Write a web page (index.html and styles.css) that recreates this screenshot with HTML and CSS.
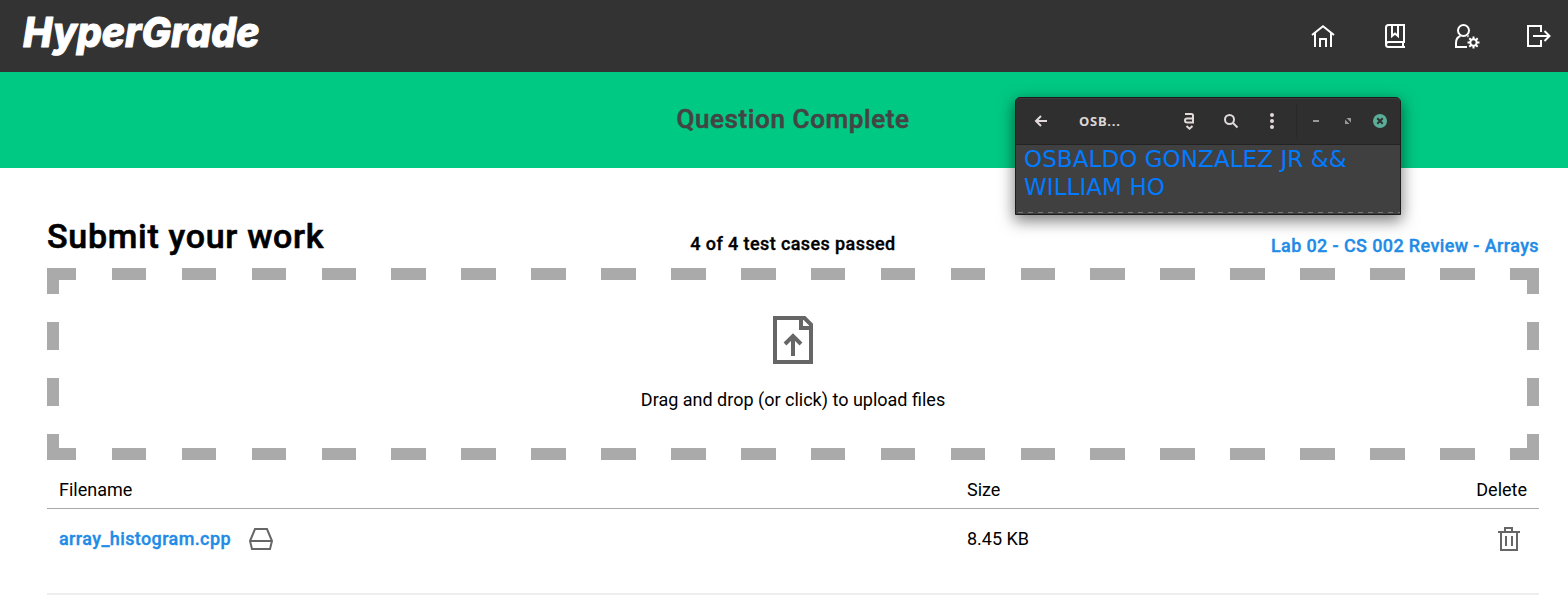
FILE: index.html
```
<!DOCTYPE html>
<html lang="en">
<head>
<meta charset="utf-8">
<title>HyperGrade</title>
<link rel="stylesheet" href="styles.css">
</head>
<body>
<header class="topbar">
  <svg class="logo" width="280" height="72" role="img" aria-label="HyperGrade"><text class="logo-text" x="23" y="46.500" textLength="236.500" lengthAdjust="spacingAndGlyphs">HyperGrade</text></svg>
  <nav class="nav">
    <svg class="icon" viewBox="0 0 24 24"><path d="M1 11 12 2.200 23 11M4 9v14M20 9v14M9 23v-8h6v8"/></svg>
    <svg class="icon" viewBox="0 0 24 24"><path d="M22 23H5.500Q3 23 3 20.500V3.500Q3 1 5.500 1H21V18H5.500Q3 18 3 20.500M20 18v5M9 1v11l3-2.500 3 2.500V1"/></svg>
    <svg class="icon" viewBox="0 0 24 24"><path d="M12 23H1v-4q0-5.500 4.500-7M12.500 12l1 .5"/><ellipse cx="8.500" cy="6.500" rx="5.500" ry="5.500"/><circle cx="18.500" cy="18.500" r="3.200"/><path d="M18.500 12.500v3M18.500 21.500v3M12.500 18.500h3M21.500 18.500h3M14.300 14.300l2 2M20.700 20.700l2 2M14.300 22.700l2-2M20.700 16.300l2-2"/></svg>
    <svg class="icon" viewBox="0 0 24 24"><path d="M14 8V2H1v20h13v-6M6 12h16M17.500 7l5 5-5 5"/></svg>
  </nav>
</header>
<section class="banner"><h2 class="banner-title">Question Complete</h2></section>
<main class="content">
  <div class="heading">
    <h1 class="title">Submit your work</h1>
    <p class="result">4 of 4 test cases passed</p>
    <a class="lab link">Lab 02 - CS 002 Review - Arrays</a>
  </div>
  <div class="dropzone">
    <svg class="upload" width="40" height="48" viewBox="0 0 40 48"><path d="M2 2h29.500L38 8.500V46H2zM28 2v10h10M20 40V20M12 28l8-8 8 8"/></svg>
    <p class="drop-text">Drag and drop (or click) to upload files</p>
  </div>
  <div class="row row-head"><span>Filename</span><span>Size</span><span class="end">Delete</span></div>
  <div class="row row-file">
    <span class="file"><a class="link">array_histogram.cpp</a>
      <svg class="drive" width="24" height="24" viewBox="0 0 24 24"><path d="M6 2h12l5 12-2 8H3L1 14zM1 14h22"/></svg></span>
    <span>8.45 KB</span>
    <svg class="trash" width="24" height="24" viewBox="0 0 24 24"><path d="M1 5h22M4 5v18h16V5M8 5V1h7v4M9 9v10M15 9v10"/></svg>
  </div>
</main>
<aside class="note">
  <div class="note-bar">
    <svg width="384" height="46" viewBox="0 0 384 46">
      <path class="glyph" d="M31 23H20M25 18l-5 5 5 5"/>
      <path class="glyph" d="M169 16h6.500q1.500 0 1.500 1.500V24.500h-6q-2 0-2-2t2-2h6M170.500 28l3 2.700 3-2.700"/>
      <circle class="glyph" cx="213.500" cy="21.500" r="4.500"/><path class="glyph" d="m217 25 4.500 4.500"/>
      <path class="dots" d="M254 17a2 2 0 1 0 4 0 2 2 0 1 0-4 0M254 23a2 2 0 1 0 4 0 2 2 0 1 0-4 0M254 29a2 2 0 1 0 4 0 2 2 0 1 0-4 0"/>
      <path class="divider" d="M280.500 6v34"/>
      <path class="min" d="M297 22h6v2h-6zM330.500 20h4.500v4.500zM329 21.500v4.500h4.500z"/>
      <circle class="close" cx="364" cy="23" r="7"/><path class="cross" d="m361.300 20.300 5.400 5.400m0-5.400-5.400 5.400"/>
    </svg>
    <span class="note-title">OSB...</span>
  </div>
  <div class="note-body">OSBALDO GONZALEZ JR &amp;&amp;<br>WILLIAM HO</div>
  <svg class="note-edge" width="384" height="1"><path d="M2 .5h382"/></svg>
</aside>
</body>
</html>
```
FILE: styles.css
```
* { box-sizing: border-box; }
body { margin: 0; height: 595px; overflow: hidden; position: relative; background: #fff; color: #000; font: 18px/24px Roboto, sans-serif; }
h1, h2, p { margin: 0; }
svg { display: block; fill: none; }
.topbar { height: 72px; padding-right: 17px; display: flex; justify-content: space-between; align-items: center; background: #333; }
.logo-text { font: italic 800 41px Inter, sans-serif; font-feature-settings: "cv11"; fill: #fff; stroke: #fff; stroke-width: 1; stroke-linejoin: round; }
.nav { display: flex; gap: 48px; }
.icon { width: 24px; height: 24px; stroke: #fff; stroke-width: 2; overflow: visible; }
.banner { height: 96px; padding: 0 0 2px 18px; display: grid; place-items: center; background: #00c983; }
.banner-title { font-size: 26px; line-height: 36px; font-weight: 500; letter-spacing: .6px; -webkit-text-stroke: .6px; color: #444; }
.content { padding: 49px 29px 0 47px; }
.heading { height: 51px; display: grid; grid-template-columns: 1fr auto 1fr; }
.title { font-size: 34px; line-height: 38px; font-weight: 500; letter-spacing: .7px; -webkit-text-stroke: .6px; }
.result { padding-top: 15px; font-weight: 500; letter-spacing: .4px; -webkit-text-stroke: .35px; }
.lab { padding-top: 17px; text-align: right; }
.link { color: #228be6; font-weight: 500; letter-spacing: .38px; -webkit-text-stroke: .35px; }
.dropzone {
  --c: #aaa;
  --h: repeating-linear-gradient(90deg, var(--c) 0 29.480px, transparent 29.480px 64.800px, var(--c) 64.800px 69.905px);
  --v: repeating-linear-gradient(180deg, var(--c) 0 26px, transparent 26px 54px, var(--c) 54px 56px);
  height: 192px; padding-top: 48px; display: flex; flex-direction: column; align-items: center; gap: 24px;
  background: var(--h) top / 100% 12px no-repeat, var(--h) bottom / 100% 12px no-repeat, var(--v) left / 12px 100% no-repeat, var(--v) right / 12px 100% no-repeat;
}
.upload { stroke: #666; stroke-width: 4; }
.row { padding: 0 12px; display: grid; grid-template-columns: 908px 1fr auto; align-items: center; }
.row-head { height: 49px; padding-top: 11px; border-bottom: 1px solid #aaa; }
.row-file { height: 86px; padding-bottom: 25px; border-bottom: 2px solid #eee; }
.file { display: flex; align-items: center; gap: 18px; }
.drive, .trash { stroke: #666; stroke-width: 2; }
.trash { margin-right: 6px; }
.note { position: absolute; left: 1015px; top: 97px; width: 386px; height: 118px; border: 1px solid #1c1c1c; border-radius: 5px 5px 0 0; background: #404040; box-shadow: 0 5px 15px 1px rgba(0,0,0,.5); }
.note-bar { height: 47px; position: relative; background: #2f2f2f; border-bottom: 1px solid #232323; border-radius: 4px 4px 0 0; box-shadow: inset 0 1px #3a3a3a; }
.note-title { position: absolute; left: 63px; top: 11px; font: 700 13px/24px "Noto Sans", sans-serif; letter-spacing: .8px; color: #ddd6d6; }
.note-body { padding-left: 8px; font: 23px/28px "DejaVu Sans", sans-serif; letter-spacing: .07px; color: #007bff; }
.glyph { stroke: #e2dada; stroke-width: 2; }
.dots { fill: #e2dada; }
.divider { stroke: #292929; }
.min { fill: #999; }
.close { fill: #5aad98; }
.cross { stroke: #303030; stroke-width: 2; }
.note-edge { position: absolute; left: 0; bottom: 1px; stroke: #777; stroke-dasharray: 5 5; }
```
